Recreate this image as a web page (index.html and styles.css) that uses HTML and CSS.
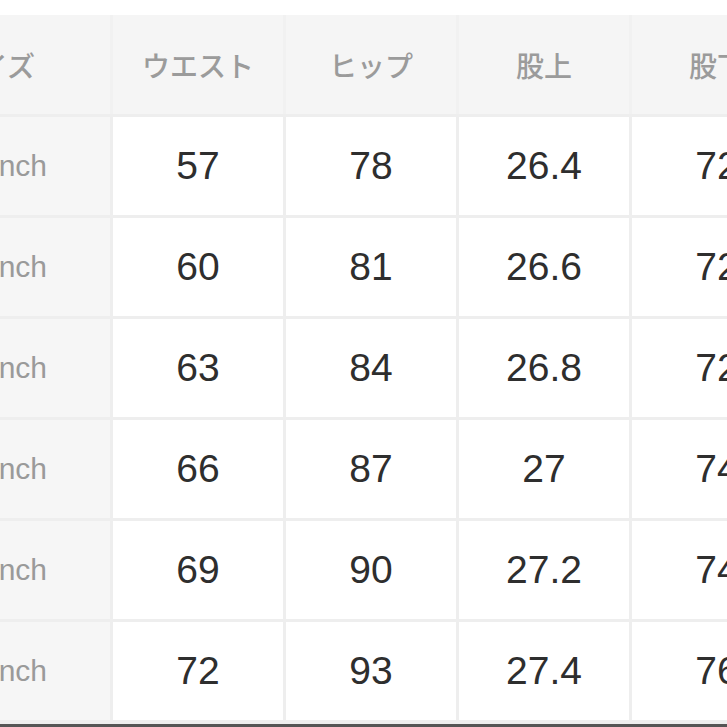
FILE: index.html
```html
<!DOCTYPE html>
<html lang="ja">
<head>
<meta charset="utf-8">
<title>サイズ表</title>
<link rel="stylesheet" href="styles.css">
</head>
<body>
<div class="sheet">
  <div class="table header-row">
    <div class="cell head first"><span>サイズ</span></div>
    <div class="cell head">ウエスト</div>
    <div class="cell head">ヒップ</div>
    <div class="cell head">股上</div>
    <div class="cell head">股下</div>
  </div>
  <div class="table body-rows">
    <div class="cell size"><span>23inch</span></div>
    <div class="cell num">57</div><div class="cell num">78</div><div class="cell num">26.4</div><div class="cell num">72</div>

    <div class="cell size"><span>24inch</span></div>
    <div class="cell num">60</div><div class="cell num">81</div><div class="cell num">26.6</div><div class="cell num">72</div>

    <div class="cell size"><span>25inch</span></div>
    <div class="cell num">63</div><div class="cell num">84</div><div class="cell num">26.8</div><div class="cell num">72</div>

    <div class="cell size"><span>26inch</span></div>
    <div class="cell num">66</div><div class="cell num">87</div><div class="cell num">27</div><div class="cell num">74</div>

    <div class="cell size"><span>27inch</span></div>
    <div class="cell num">69</div><div class="cell num">90</div><div class="cell num">27.2</div><div class="cell num">74</div>

    <div class="cell size"><span>28inch</span></div>
    <div class="cell num">72</div><div class="cell num">93</div><div class="cell num">27.4</div><div class="cell num">76</div>
  </div>
  <div class="rule"></div>
</div>
</body>
</html>
```

FILE: styles.css
```css
html, body {
  margin: 0;
  padding: 0;
  background: #ffffff;
  overflow: hidden;
}

body {
  width: 727px;
  height: 727px;
}

.sheet {
  padding-top: 15px;
  margin-left: -110px;
  width: 920px;
}

.table {
  display: grid;
  grid-template-columns: 220px repeat(4, 170px);
  gap: 3px;
}

.header-row {
  grid-template-rows: 99px;
  background: #f1f1f1;
}

.body-rows {
  grid-template-rows: repeat(6, 98px);
  background: #eeeeee;
  padding-top: 3px;
  padding-bottom: 4px;
}

.cell {
  display: flex;
  align-items: center;
  justify-content: center;
}

.head {
  background: #f5f5f5;
  color: #9b9b9b;
  font-family: "Noto Sans CJK JP", "Noto Sans", sans-serif;
  font-size: 28px;
  font-weight: 500;
}

.first {
  justify-content: flex-end;
  padding-right: 75px;
}

.size {
  background: #f6f6f6;
  color: #9a9a9a;
  font-family: "Liberation Sans", Arial, sans-serif;
  font-size: 30px;
  justify-content: flex-end;
  padding-right: 63px;
}

.num {
  background: #ffffff;
  color: #2e2e2e;
  font-family: "Liberation Sans", Arial, sans-serif;
  font-size: 39px;
}

.rule {
  height: 3px;
  background: #555555;
}
```
